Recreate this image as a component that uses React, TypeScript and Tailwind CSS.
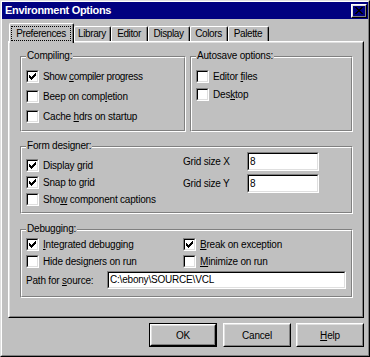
import React from "react";

function CheckMark() {
  return (
    <svg width="7" height="7" viewBox="0 0 7 7" shapeRendering="crispEdges" fill="#000">
      <rect x="6" y="0" width="1" height="1" />
      <rect x="5" y="1" width="2" height="1" />
      <rect x="0" y="2" width="1" height="1" />
      <rect x="4" y="2" width="3" height="1" />
      <rect x="0" y="3" width="2" height="1" />
      <rect x="3" y="3" width="3" height="1" />
      <rect x="0" y="4" width="5" height="1" />
      <rect x="1" y="5" width="3" height="1" />
      <rect x="2" y="6" width="1" height="1" />
    </svg>
  );
}

function CloseX() {
  return (
    <svg width="8" height="7" viewBox="0 0 8 7" shapeRendering="crispEdges" fill="#000">
      <rect x="0" y="0" width="2" height="1" />
      <rect x="6" y="0" width="2" height="1" />
      <rect x="1" y="1" width="2" height="1" />
      <rect x="5" y="1" width="2" height="1" />
      <rect x="2" y="2" width="4" height="1" />
      <rect x="3" y="3" width="2" height="1" />
      <rect x="2" y="4" width="4" height="1" />
      <rect x="1" y="5" width="2" height="1" />
      <rect x="5" y="5" width="2" height="1" />
      <rect x="0" y="6" width="2" height="1" />
      <rect x="6" y="6" width="2" height="1" />
    </svg>
  );
}

function CheckBox({ checked }: { checked?: boolean }) {
  return (
    <div className="w-[13px] h-[13px] shrink-0 border border-t-[#808080] border-l-[#808080] border-r-white border-b-white">
      <div className="w-full h-full border border-t-black border-l-black border-r-[#dfdfdf] border-b-[#dfdfdf] bg-white flex items-center justify-center">
        {checked && <CheckMark />}
      </div>
    </div>
  );
}

function CB({ checked, children }: { checked?: boolean; children: React.ReactNode }) {
  return (
    <div className="flex items-center gap-[4px] h-[13px]">
      <CheckBox checked={checked} />
      <span className="leading-[13px] whitespace-nowrap">{children}</span>
    </div>
  );
}

function Group({ title, className, children }: { title: string; className: string; children?: React.ReactNode }) {
  return (
    <div className={"relative border border-t-[#808080] border-l-[#808080] border-r-white border-b-white " + className}>
      <div className="h-full border border-t-white border-l-white border-r-[#808080] border-b-[#808080]">
        {children}
      </div>
      <span className="absolute left-[5px] top-[-7px] px-[1px] bg-[#c0c0c0] leading-[12px] whitespace-nowrap">{title}</span>
    </div>
  );
}

function Field({ value, className }: { value: string; className: string }) {
  return (
    <div className={"border border-t-[#808080] border-l-[#808080] border-r-white border-b-white " + className}>
      <div className="h-full border border-t-black border-l-black border-r-[#dfdfdf] border-b-[#dfdfdf] bg-white flex items-center pl-[1px] leading-[12px] whitespace-nowrap">
        {value}
      </div>
    </div>
  );
}

function Raised({ children }: { children: React.ReactNode }) {
  return (
    <div className="h-full border border-t-white border-l-white border-r-black border-b-black">
      <div className="h-full border border-t-[#dfdfdf] border-l-[#dfdfdf] border-r-[#808080] border-b-[#808080] flex items-center justify-center">
        {children}
      </div>
    </div>
  );
}

function Tab({ label, className }: { label: string; className: string }) {
  return (
    <div className={"h-[15px] rounded-tr-[2px] rounded-tl-[2px] border-t border-l border-r border-t-white border-l-white border-r-black " + className}>
      <div className="h-full border-r border-r-[#808080] flex items-center justify-center leading-[12px] whitespace-nowrap tracking-[-0.4px]">
        {label}
      </div>
    </div>
  );
}

export default function App() {
  return (
    <div className="w-[370px] h-[357px] bg-[#c0c0c0] text-black text-[10px] tracking-[-0.2px] font-['Liberation_Sans',Arial,sans-serif]">
      <div className="h-full border border-t-[#dfdfdf] border-l-[#dfdfdf] border-r-black border-b-black">
        <div className="h-full border border-t-white border-l-white border-r-[#808080] border-b-[#808080] flex flex-col">
          {/* Title bar */}
          <div className="h-[17px] bg-[#000080] flex items-center justify-between pl-[3px] pr-[1px]">
            <span className="text-white font-bold text-[11px] leading-[13px] tracking-[-0.3px]">Environment Options</span>
            <div className="w-[16px] h-[14px]">
              <Raised>
                <CloseX />
              </Raised>
            </div>
          </div>

          {/* Tabs */}
          <div className="mt-[4px] ml-[7px] h-[18px] flex items-end">
            <div className="relative z-10 w-[65px] h-[20px] -mb-[2px] bg-[#c0c0c0] rounded-tl-[2px] rounded-tr-[2px] border-t border-l border-r border-t-white border-l-white border-r-black">
              <div className="h-full border-r border-r-[#808080] pt-[2px] pl-[1px] pr-[1px]">
                <div className="h-[15px] border border-dotted border-black flex items-center justify-center leading-[12px] tracking-[-0.4px]">
                  Preferences
                </div>
              </div>
            </div>
            <Tab label="Library" className="w-[37px]" />
            <Tab label="Editor" className="w-[37px]" />
            <Tab label="Display" className="w-[42px]" />
            <Tab label="Colors" className="w-[38px]" />
            <Tab label="Palette" className="w-[41px]" />
          </div>

          {/* Page */}
          <div className="ml-[6px] w-[356px] h-[277px] border border-t-white border-l-white border-r-black border-b-black">
            <div className="h-full border border-t-[#dfdfdf] border-l-[#dfdfdf] border-r-[#808080] border-b-[#808080] pt-[13px] pl-[10px]">
              <div className="flex gap-[4px]">
                <Group title="Compiling:" className="w-[166px] h-[76px]">
                  <div className="pl-[4px] pt-[12px] flex flex-col gap-[7px]">
                    <CB checked>
                      <span className="tracking-[-0.35px]">
                        Show <u className="underline-offset-[1px]">c</u>ompiler progress
                      </span>
                    </CB>
                    <CB>
                      Beep on comp<u className="underline-offset-[1px]">l</u>etion
                    </CB>
                    <CB>
                      Cache <u className="underline-offset-[1px]">h</u>drs on startup
                    </CB>
                  </div>
                </Group>
                <Group title="Autosave options:" className="w-[163px] h-[76px]">
                  <div className="pl-[4px] pt-[12px] flex flex-col gap-[5px]">
                    <CB>
                      Editor <u className="underline-offset-[1px]">f</u>iles
                    </CB>
                    <CB>
                      Des<u className="underline-offset-[1px]">k</u>top
                    </CB>
                  </div>
                </Group>
              </div>

              <Group title="Form designer:" className="mt-[14px] w-[333px] h-[68px]">
                <div className="flex">
                  <div className="w-[161px] pl-[4px] pt-[11px] flex flex-col gap-[4px]">
                    <CB checked>Display grid</CB>
                    <CB checked>Snap to grid</CB>
                    <CB>
                      Sho<u className="underline-offset-[1px]">w</u> component captions
                    </CB>
                  </div>
                  <div className="pt-[4px] flex flex-col gap-[3px]">
                    <div className="flex items-center">
                      <span className="w-[64px] whitespace-nowrap">Grid size X</span>
                      <Field value="8" className="w-[72px] h-[19px]" />
                    </div>
                    <div className="flex items-center">
                      <span className="w-[64px] whitespace-nowrap">Grid size Y</span>
                      <Field value="8" className="w-[72px] h-[19px]" />
                    </div>
                  </div>
                </div>
              </Group>

              <Group title="Debugging:" className="mt-[15px] w-[333px] h-[69px]">
                <div className="pt-[7px]">
                  <div className="grid grid-cols-[161px_1fr] gap-y-[4px]">
                    <div className="pl-[4px]">
                      <CB checked>
                        <u className="underline-offset-[1px]">I</u>ntegrated debugging
                      </CB>
                    </div>
                    <CB checked>
                      <u className="underline-offset-[1px]">B</u>reak on exception
                    </CB>
                    <div className="pl-[4px]">
                      <CB>
                        Hide desi<u className="underline-offset-[1px]">g</u>ners on run
                      </CB>
                    </div>
                    <CB>
                      <u className="underline-offset-[1px]">M</u>inimize on run
                    </CB>
                  </div>
                  <div className="mt-[3px] pl-[4px] flex items-center">
                    <span className="w-[81px] whitespace-nowrap">
                      Path for <u className="underline-offset-[1px]">s</u>ource:
                    </span>
                    <Field value="C:\ebony\SOURCE\VCL" className="w-[239px] h-[18px]" />
                  </div>
                </div>
              </Group>
            </div>
          </div>

          {/* Buttons */}
          <div className="mt-[5px] flex justify-end pr-[4px]">
            <div className="w-[68px] h-[24px] border border-black">
              <Raised>OK</Raised>
            </div>
            <div className="ml-[6px] w-[68px] h-[24px]">
              <Raised>Cancel</Raised>
            </div>
            <div className="ml-[5px] w-[68px] h-[24px]">
              <Raised>
                <span>
                  <u className="underline-offset-[1px]">H</u>elp
                </span>
              </Raised>
            </div>
          </div>
        </div>
      </div>
    </div>
  );
}
